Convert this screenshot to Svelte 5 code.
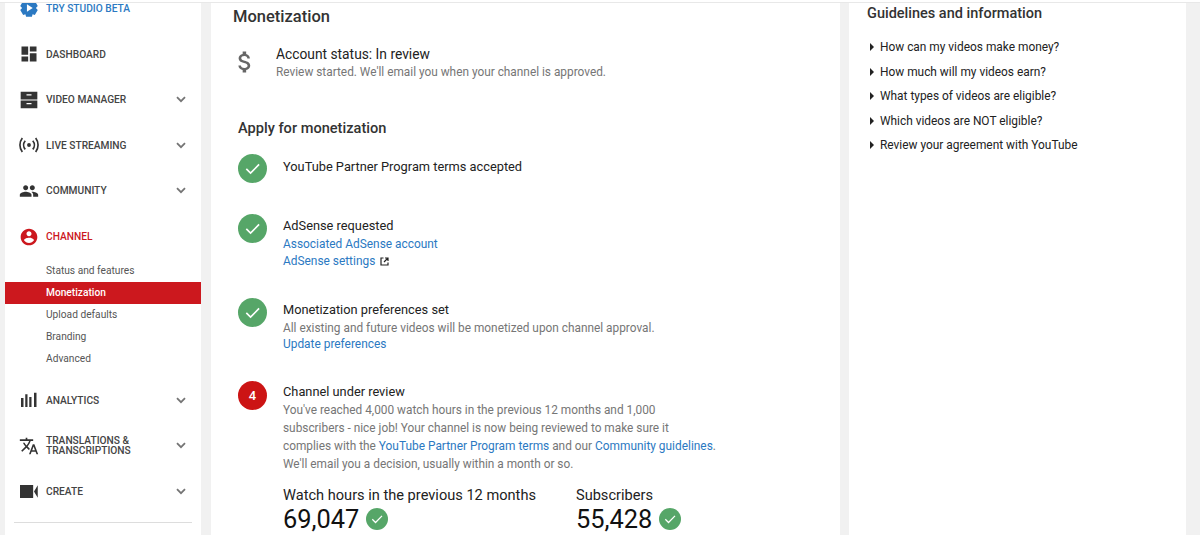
<script>
  const navTop = [
    { label: "Dashboard", icon: "dashboard" },
    { label: "Video Manager", icon: "manager", more: true },
    { label: "Live Streaming", icon: "live", more: true },
    { label: "Community", icon: "community", more: true }
  ];
  const navBottom = [
    { label: "Analytics", icon: "analytics", more: true },
    { label: "Translations & Transcriptions", icon: "translate", more: true, wrap: true },
    { label: "Create", icon: "create", more: true }
  ];
  const subItems = ["Status and features", "Monetization", "Upload defaults", "Branding", "Advanced"];
  const guides = [
    "How can my videos make money?",
    "How much will my videos earn?",
    "What types of videos are eligible?",
    "Which videos are NOT eligible?",
    "Review your agreement with YouTube"
  ];
</script>

{#snippet check(size)}
  <svg class="check" width={size} height={size} viewBox="0 0 30 30">
    <circle cx="15" cy="15" r="15" fill="#56a668" />
    <path d="M8.6 15.4l4.4 4.4 8.8-9" fill="none" stroke="#fff" stroke-width="1.7" />
  </svg>
{/snippet}

{#snippet icon(name)}
  <svg class="nav-icon" width="20" height="20" viewBox="0 0 24 24" fill="#333">
    {#if name === "dashboard"}
      <path d="M3 13h8V3H3v10zm0 8h8v-6H3v6zm10 0h8V11h-8v10zm0-18v6h8V3h-8z" />
    {:else if name === "manager"}
      <path d="M2 2h20v9.500H2zM2 12.500h20V22H2z" />
      <path d="M9 5h6v1.500H9zM9 15.500h6V17H9z" fill="#fff" />
    {:else if name === "live"}
      <circle cx="12" cy="12" r="2.300" />
      <path d="M7.500 6.800a8 8 0 0 0 0 10.400M16.500 6.800a8 8 0 0 1 0 10.400M4 3.500a14 14 0 0 0 0 17M20 3.500a14 14 0 0 1 0 17" fill="none" stroke="#333" stroke-width="2" />
    {:else if name === "community"}
      <path d="M16 11c1.660 0 2.990-1.340 2.990-3S17.660 5 16 5c-1.660 0-3 1.340-3 3s1.340 3 3 3zm-8 0c1.660 0 2.990-1.340 2.990-3S9.660 5 8 5C6.340 5 5 6.340 5 8s1.340 3 3 3zm0 2c-2.330 0-7 1.170-7 3.500V19h14v-2.500c0-2.330-4.670-3.500-7-3.500zm8 0c-.29 0-.62.02-.97.05 1.160.84 1.970 1.970 1.970 3.450V19h6v-2.500c0-2.330-4.670-3.500-7-3.500z" />
    {:else if name === "channel"}
      <path fill="#cc181e" d="M12 2C6.480 2 2 6.480 2 12s4.480 10 10 10 10-4.480 10-10S17.520 2 12 2zm0 3c1.660 0 3 1.340 3 3s-1.340 3-3 3-3-1.340-3-3 1.340-3 3-3zm0 14.200c-2.500 0-4.710-1.280-6-3.220.03-1.990 4-3.080 6-3.080 1.990 0 5.970 1.090 6 3.080-1.290 1.940-3.500 3.220-6 3.220z" />
    {:else if name === "analytics"}
      <path d="M2.400 9.600h3v10.800h-3zM7.500 5.200h2.700v15.200H7.500zM12.300 8.400h2.700v12h-2.700zM18 3.200h3v17.200h-3z" />
    {:else if name === "translate"}
      <path d="M12.870 15.070l-2.540-2.510.03-.03c1.740-1.940 2.980-4.170 3.710-6.530H17V4h-7V2H8v2H1v1.990h11.170C11.500 7.920 10.440 9.750 9 11.350 8.070 10.320 7.300 9.190 6.690 8h-2c.73 1.630 1.730 3.170 2.980 4.560l-5.090 5.020L4 19l5-5 3.110 3.110.76-2.040zM18.500 10h-2L12 22h2l1.120-3h4.750L21 22h2l-4.500-12zm-2.620 7l1.620-4.330L19.120 17h-3.240z" />
    {:else if name === "create"}
      <path d="M1.200 4.800H17v15.600H1.200zM18 12.500l4.500-7.500v15z" />
    {/if}
  </svg>
{/snippet}

{#snippet chevron()}
  <svg class="chevron" width="10" height="7" viewBox="0 0 10 7">
    <path d="M1 1.200l4 4 4-4" fill="none" stroke="#757575" stroke-width="1.800" />
  </svg>
{/snippet}

{#snippet navRow(item)}
  <div class="nav-row">
    {@render icon(item.icon)}
    <span class="nav-label" class:wrap={item.wrap}>{item.label}</span>
    {#if item.more}{@render chevron()}{/if}
  </div>
{/snippet}

<div class="topbar"></div>

<div class="page">
  <aside class="sidebar">
    <div class="nav-row studio">
      <svg class="nav-icon" width="20" height="20" viewBox="0 0 24 24">
        <path fill="#2b79c2" d="M8.500 1.500h7l.8 3 2.700-1 3.500 6-2.200 2.500 2.200 2.500-3.500 6-2.700-1-.8 3h-7l-.8-3-2.700 1-3.500-6L3.700 12 1.500 9.500l3.500-6 2.700 1z" />
        <path fill="#fff" d="M9.500 7.500l7 4.500-7 4.500z" />
      </svg>
      <span class="nav-label">Try Studio Beta</span>
    </div>
    {#each navTop as item}
      {@render navRow(item)}
    {/each}
    <div class="nav-row active">
      {@render icon("channel")}
      <span class="nav-label">Channel</span>
    </div>
    <ul class="sub-list">
      {#each subItems as sub}
        <li class:current={sub === "Monetization"}>{sub}</li>
      {/each}
    </ul>
    {#each navBottom as item}
      {@render navRow(item)}
    {/each}
    <hr class="side-rule" />
  </aside>

  <main class="main">
    <h1>Monetization</h1>
    <div class="status">
      <svg class="dollar" width="28" height="28" viewBox="0 0 24 24">
        <path fill="#666" d="M11.800 10.900c-2.270-.59-3-1.200-3-2.150 0-1.090 1.010-1.850 2.700-1.850 1.780 0 2.440.85 2.500 2.100h2.210c-.07-1.720-1.120-3.300-3.210-3.810V3h-3v2.160c-1.940.42-3.500 1.680-3.500 3.610 0 2.310 1.910 3.460 4.700 4.130 2.500.6 3 1.480 3 2.410 0 .69-.49 1.790-2.700 1.790-2.060 0-2.870-.92-2.980-2.100h-2.200c.12 2.190 1.760 3.420 3.680 3.830V21h3v-2.150c1.950-.37 3.500-1.500 3.500-3.550 0-2.840-2.430-3.810-4.700-4.400z" />
      </svg>
      <div>
        <div class="status-title">Account status: In review</div>
        <div class="muted">Review started. We'll email you when your channel is approved.</div>
      </div>
    </div>

    <h2>Apply for monetization</h2>

    <div class="step first">
      {@render check(29)}
      <div class="step-body"><div class="step-title">YouTube Partner Program terms accepted</div></div>
    </div>
    <div class="step adsense">
      {@render check(29)}
      <div class="step-body">
        <div class="step-title">AdSense requested</div>
        <div class="line"><a href="#a">Associated AdSense account</a></div>
        <div class="settings">
          <a href="#a">AdSense settings</a>
          <svg width="9" height="9" viewBox="0 0 9 9">
            <path d="M3.500 1H1v7h7V5.500M5 1h3v3M8 1L4 5" fill="none" stroke="#222" stroke-width="1.200" />
          </svg>
        </div>
      </div>
    </div>
    <div class="step prefs">
      {@render check(29)}
      <div class="step-body">
        <div class="step-title">Monetization preferences set</div>
        <div class="muted">All existing and future videos will be monetized upon channel approval.</div>
        <div class="line pull"><a href="#a">Update preferences</a></div>
      </div>
    </div>
    <div class="step review">
      <div class="num">4</div>
      <div class="step-body">
        <div class="step-title up">Channel under review</div>
        <p class="muted">
          You've reached 4,000 watch hours in the previous 12 months and 1,000<br />
          subscribers - nice job! Your channel is now being reviewed to make sure it<br />
          complies with the <a href="#a">YouTube Partner Program terms</a> and our <a href="#a">Community guidelines</a>.<br />
          We'll email you a decision, usually within a month or so.
        </p>
        <div class="stats">
          <div class="stat">
            <div class="stat-label">Watch hours in the previous 12 months</div>
            <div class="stat-value">69,047 {@render check(22)}</div>
          </div>
          <div class="stat">
            <div class="stat-label">Subscribers</div>
            <div class="stat-value">55,428 {@render check(22)}</div>
          </div>
        </div>
      </div>
    </div>
  </main>

  <aside class="guide">
    <h3>Guidelines and information</h3>
    <ul>
      {#each guides as g}
        <li><span class="tri"></span>{g}</li>
      {/each}
    </ul>
  </aside>
</div>

<style>
  :global(body) {
    margin: 0;
    background: #f1f1f1;
    overflow: hidden;
  }

  .topbar {
    height: 2px;
    background: #fff;
    border-bottom: 1px solid #e8e8e8;
    position: relative;
    z-index: 1;
  }

  .page {
    display: flex;
    align-items: flex-start;
    height: 532px;
    overflow: hidden;
    font-family: Roboto, "Liberation Sans", sans-serif;
    font-size: 13px;
    color: #222;
  }

  .sidebar {
    width: 196px;
    height: 532px;
    margin-left: 5px;
    background: #fff;
    flex: none;
  }

  .nav-row {
    display: flex;
    align-items: center;
    height: 45.6px;
    padding: 0 15px 0 14px;
    gap: 7px;
  }

  .studio {
    height: 10px;
    margin-bottom: 18.4px;
  }

  .studio .nav-label { color: #2b79c2; }

  .nav-icon { flex: none; }

  .nav-label {
    flex: 1;
    min-width: 0;
    font-size: 10.2px;
    font-weight: 500;
    text-transform: uppercase;
    color: #444;
    white-space: nowrap;
  }

  .nav-label.wrap {
    white-space: normal;
    line-height: 10px;
    padding-right: 30px;
  }

  .active .nav-label { color: #cc181e; }

  .chevron { flex: none; }

  .sub-list {
    list-style: none;
    margin: 1px 0 7px;
    padding: 0;
  }

  .sub-list li {
    height: 22px;
    line-height: 22px;
    padding-left: 41px;
    font-size: 10.2px;
    color: #555;
  }

  .sub-list li.current {
    background: #cc181e;
    color: #fff;
    font-weight: 500;
  }

  .side-rule {
    border: 0;
    border-top: 1px solid #ddd;
    margin: 8px 9px 0;
  }

  .main {
    width: 629px;
    height: 532px;
    margin-left: 10px;
    padding: 0 0 0 22px;
    box-sizing: border-box;
    background: #fff;
    flex: none;
  }

  h1 {
    margin: 0;
    font-size: 16.500px;
    font-weight: 500;
    line-height: 20px;
    padding-top: 4px;
    color: #333;
  }

  .status {
    display: flex;
    margin-top: 18px;
    gap: 17px;
  }

  .dollar {
    margin-top: 3px;
    margin-left: -2px;
  }

  .status-title {
    font-size: 13.800px;
    line-height: 18px;
    color: #222;
  }

  .muted {
    font-size: 11.850px;
    line-height: 18px;
    color: #767676;
    margin: 0;
  }

  h2 {
    margin: 37px 0 0 5px;
    font-size: 14.600px;
    font-weight: 500;
    line-height: 20px;
    color: #333;
  }

  .step {
    display: flex;
    gap: 16px;
    padding-left: 5px;
  }

  .first { margin-top: 16px; height: 60px; }
  .first .step-title { padding-top: 4px; }
  .adsense { height: 84px; }
  .prefs { height: 83px; }

  .check { flex: none; }

  .step-title {
    font-size: 12.800px;
    line-height: 18px;
    color: #222;
    padding-top: 3px;
  }

  .step-title.up { padding-top: 2px; }

  a {
    font-size: 11.900px;
    line-height: 18px;
    color: #2b79c2;
    text-decoration: none;
  }

  .line { line-height: 17px; }
  .line.pull { margin-top: -2px; }

  .settings {
    display: flex;
    align-items: center;
    gap: 5px;
    margin-top: -1px;
  }

  .num {
    width: 29px;
    height: 29px;
    flex: none;
    border-radius: 50%;
    background: #cc1414;
    color: #fff;
    font-size: 13px;
    font-weight: 500;
    line-height: 29px;
    text-align: center;
  }

  .stats {
    display: flex;
    gap: 40px;
    margin-top: 13px;
  }

  .stat-label {
    font-size: 14.600px;
    line-height: 18px;
    color: #222;
  }

  .stat-value {
    display: flex;
    align-items: center;
    gap: 7px;
    font-size: 25.400px;
    line-height: 30px;
    color: #111;
  }

  .guide {
    width: 337px;
    height: 532px;
    margin-left: 9px;
    padding: 0 0 0 18px;
    box-sizing: border-box;
    background: #fff;
    flex: none;
  }

  h3 {
    margin: 0;
    padding-top: 2px;
    font-size: 14.500px;
    font-weight: 500;
    line-height: 18px;
    color: #333;
  }

  .guide ul {
    list-style: none;
    margin: 12px 0 0;
    padding: 0;
  }

  .guide li {
    display: flex;
    align-items: center;
    height: 24.5px;
    font-size: 11.900px;
    color: #222;
  }

  .tri {
    width: 0;
    height: 0;
    margin: 0 6px 0 3px;
    border-left: 4px solid #222;
    border-top: 4px solid transparent;
    border-bottom: 4px solid transparent;
  }
</style>
